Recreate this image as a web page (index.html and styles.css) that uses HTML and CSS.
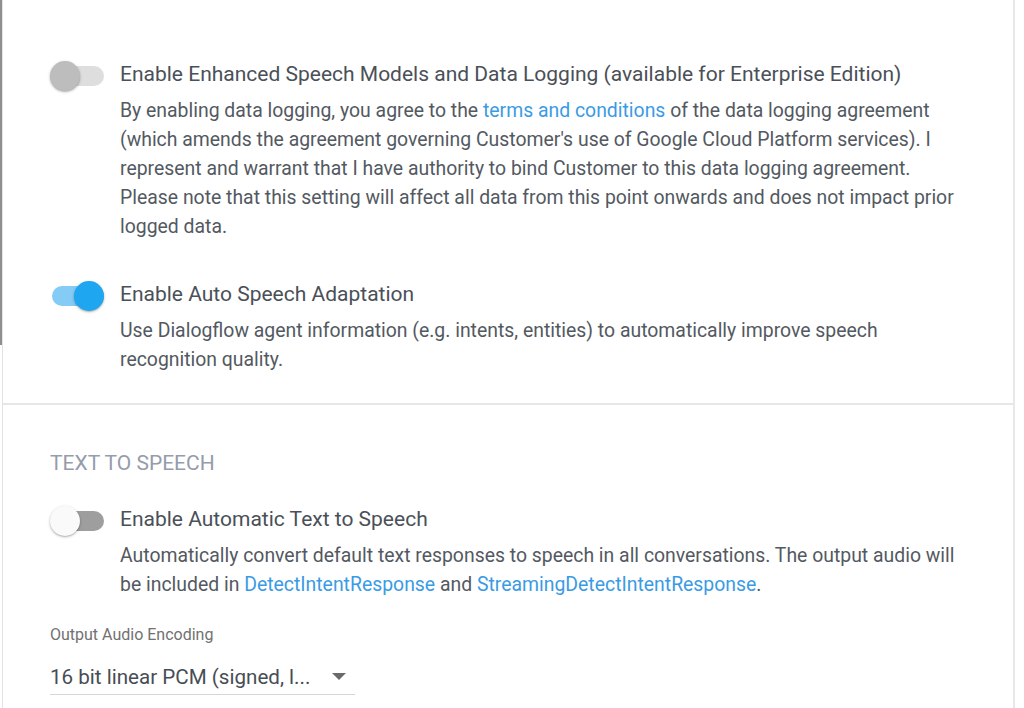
FILE: index.html
```html
<!DOCTYPE html>
<html>
<head>
<meta charset="utf-8">
<link rel="stylesheet" href="styles.css">
</head>
<body>
<div class="page">
  <div class="edge"><div class="edge-mark"></div></div>
  <div class="card">
    <section class="section first">
      <div class="setting">
        <div class="toggle off-grey"><span class="track"></span><span class="thumb"></span></div>
        <div class="content">
          <div class="title">Enable Enhanced Speech Models and Data Logging (available for Enterprise Edition)</div>
          <div class="desc">By enabling data logging, you agree to the <a class="link">terms and conditions</a> of the data logging agreement (which amends the agreement governing Customer's use of Google Cloud Platform services). I represent and warrant that I have authority to bind Customer to this data logging agreement. Please note that this setting will affect all data from this point onwards and does not impact prior logged data.</div>
        </div>
      </div>
      <div class="setting">
        <div class="toggle on"><span class="track"></span><span class="thumb"></span></div>
        <div class="content">
          <div class="title">Enable Auto Speech Adaptation</div>
          <div class="desc">Use Dialogflow agent information (e.g. intents, entities) to automatically improve speech recognition quality.</div>
        </div>
      </div>
    </section>
    <section class="section second">
      <h2 class="heading">TEXT TO SPEECH</h2>
      <div class="setting">
        <div class="toggle off"><span class="track"></span><span class="thumb"></span></div>
        <div class="content">
          <div class="title">Enable Automatic Text to Speech</div>
          <div class="desc">Automatically convert default text responses to speech in all conversations. The output audio will be included in <a class="link">DetectIntentResponse</a> and <a class="link">StreamingDetectIntentResponse</a>.</div>
        </div>
      </div>
      <div class="field">
        <div class="label">Output Audio Encoding</div>
        <div class="select">
          <span class="value">16 bit linear PCM (signed, l...</span>
          <span class="arrow"></span>
        </div>
      </div>
    </section>
  </div>
  <div class="gutter"></div>
</div>
</body>
</html>
```
FILE: styles.css
```css
html, body {
  margin: 0;
  padding: 0;
  background: #ffffff;
}
body {
  font-family: Roboto, "Noto Sans", "Liberation Sans", sans-serif;
  color: #4d535b;
  width: 1024px;
  height: 708px;
  overflow: hidden;
}
.page {
  display: flex;
  min-height: 708px;
}
.edge {
  width: 2px;
  flex: none;
}
.edge-mark {
  height: 345px;
  background: #8f8f8f;
}
.card {
  width: 1010px;
  flex: none;
  border-left: 1px solid #e3e3e3;
  border-right: 2px solid #e8e8e8;
  box-sizing: content-box;
}
.gutter {
  flex: 1;
}
.section {
  padding-left: 47px;
  padding-right: 48px;
}
.section.first {
  padding-top: 59px;
  padding-bottom: 29px;
  border-bottom: 2px solid #e6e6e6;
}
.section.second {
  padding-top: 43px;
}
.heading {
  margin: 0 0 26px 0;
  font-size: 21px;
  line-height: 30px;
  font-weight: 400;
  color: #959cab;
}
.setting {
  display: flex;
  align-items: flex-start;
}
.setting + .setting {
  margin-top: 38px;
}
.toggle {
  position: relative;
  width: 56px;
  height: 30px;
  flex: none;
  margin-right: 14px;
  margin-top: 2px;
}
.toggle .track {
  position: absolute;
  left: 2px;
  top: 5px;
  width: 52px;
  height: 20px;
  border-radius: 10px;
  background: #dedede;
}
.toggle .thumb {
  position: absolute;
  top: 0;
  left: 0;
  width: 30px;
  height: 30px;
  border-radius: 50%;
  background: #bdbdbd;
  box-shadow: 0 1px 3px rgba(0,0,0,0.25), 0 1px 1px rgba(0,0,0,0.12);
}
.toggle.on .track {
  background: #84cbf5;
}
.toggle.on .thumb {
  left: 24px;
  background: #1ea6f1;
}
.toggle.off .track {
  background: #9e9e9e;
}
.toggle.off .thumb {
  background: #fafafa;
}
.content {
  flex: 1;
}
.title {
  font-size: 21px;
  line-height: 30px;
  color: #4a5058;
}
.desc {
  margin-top: 7px;
  font-size: 19.4px;
  line-height: 29px;
  color: #535961;
}
.link {
  color: #3a9be4;
  text-decoration: none;
}
.field {
  margin-top: 26px;
  width: 305px;
}
.label {
  font-size: 16px;
  line-height: 20px;
  color: #717171;
}
.select {
  margin-top: 17px;
  display: flex;
  align-items: center;
  justify-content: space-between;
  border-bottom: 1px solid #d6d6d6;
  padding-bottom: 2px;
}
.value {
  font-size: 20.6px;
  line-height: 30px;
  color: #474d54;
}
.arrow {
  width: 0;
  height: 0;
  border-left: 7px solid transparent;
  border-right: 7px solid transparent;
  border-top: 7px solid #6a6a6a;
  margin-right: 9px;
  margin-bottom: 2px;
}
```
